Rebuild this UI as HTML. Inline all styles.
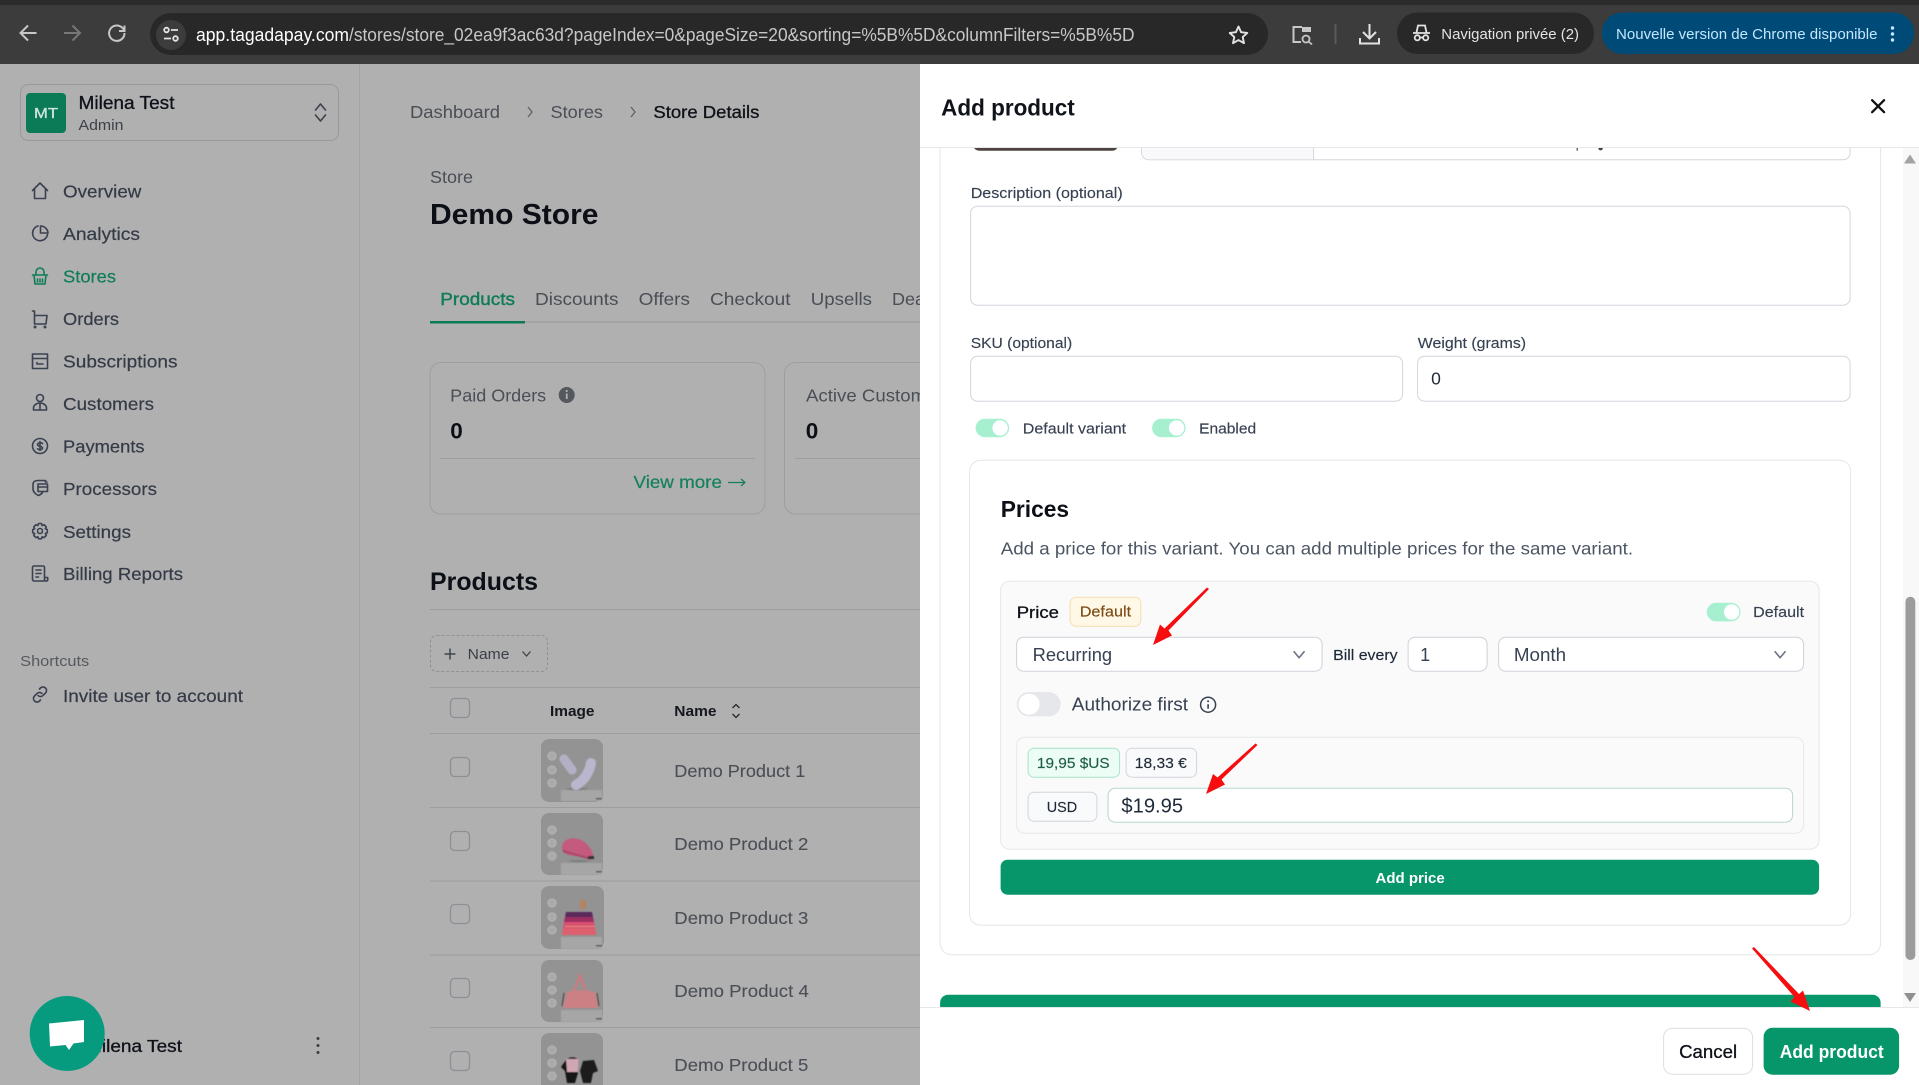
<!DOCTYPE html>
<html lang="fr"><head><meta charset="utf-8"><title>Add product</title>
<style>
html,body{margin:0;padding:0;background:#b0b0b0;overflow:hidden}
svg{display:block}
text{font-family:"Liberation Sans",sans-serif;white-space:pre}
.nav{font-size:17.5px;fill:#343a46;stroke:#343a46;stroke-width:.2}
.dk{fill:#0e1118;stroke:#0e1118;stroke-width:.3}
.g2{fill:#4a4e55}
.b{font-weight:700}
.lab{font-size:15px;fill:#374151;stroke:#374151;stroke-width:.15}
.ic{fill:none;stroke:#3a4150;stroke-width:2;stroke-linecap:round;stroke-linejoin:round}
.chev{fill:none;stroke:#6b7280;stroke-width:1.6;stroke-linecap:round;stroke-linejoin:round}
</style></head>
<body>
<svg xmlns="http://www.w3.org/2000/svg" width="1919" height="1085" viewBox="0 0 1919 1085">
<defs><filter id="soft" x="-5%" y="-5%" width="110%" height="110%"><feGaussianBlur stdDeviation="0.45"/></filter></defs>
<!-- page background -->
<rect x="0" y="64" width="1919" height="1021" fill="#b0b0b0"/>
<rect x="359" y="64" width="1" height="1021" fill="#a4a4a6"/>

<!-- sidebar account -->
<rect x="20.500" y="84.500" width="318" height="56" rx="8" fill="#b0b0b0" stroke="#98999e"/>
<rect x="26" y="93" width="40" height="40" rx="4" fill="#0b7a57"/>
<text x="34" y="118" font-size="15" fill="#cfe3dc" stroke="#cfe3dc" stroke-width=".35" textLength="24" lengthAdjust="spacingAndGlyphs">MT</text>
<text x="78.500" y="109" font-size="18" class="dk" textLength="96" lengthAdjust="spacingAndGlyphs">Milena Test</text>
<text x="78.500" y="130" font-size="15" fill="#3c4048" textLength="45" lengthAdjust="spacingAndGlyphs">Admin</text>
<path d="M315.500 110l5-6 5 6M315.500 115l5 6 5-6" fill="none" stroke="#3f444d" stroke-width="1.700" stroke-linecap="round" stroke-linejoin="round"/>

<!-- sidebar nav icons -->
<path class="ic" style="stroke-width:1.6" d="M32.500 190.500 40 183l7.500 7.500M34.500 188.500V198.500H45.500V188.500"/>
<g class="ic" style="stroke-width:1.6"><path d="M38 226a7.500 7.500 0 1 0 9.500 8.500"/><path d="M40.500 226a7.500 7.500 0 0 1 7.500 7H40.500z"/></g>
<g class="ic" style="stroke:#0e7c58;stroke-width:1.6"><path d="M32.500 275H47.500M34 275l1 9H45l1-9M36 275v-3a4 4 0 0 1 8 0v3"/><path d="M37.500 279v3M40 279v3M42.500 279v3"/></g>
<g class="ic" style="stroke-width:1.6"><path d="M32.500 311H34.500V324H46l1-8.500H35"/><circle cx="35" cy="327" r=".7"/><circle cx="45" cy="327" r=".7"/></g>
<g class="ic" style="stroke-width:1.6"><rect x="32.500" y="354" width="15" height="14.500"/><path d="M32.500 358.500H47.500M37 364h6M37 364v-1.500"/></g>
<g class="ic" style="stroke-width:1.6"><circle cx="40" cy="398" r="3.500"/><path d="M33.500 410v-2a6.500 5 0 0 1 13 0v2zM40 403v7"/></g>
<g class="ic" style="stroke-width:1.6"><circle cx="40" cy="446" r="7.500"/><path d="M42.500 443.500c-1-1-5-1-5 1 0 2.500 5 1 5 3.500 0 2-4 2-5 .8M40 441.500v9"/></g>
<g class="ic" style="stroke-width:1.600"><path d="M47 482h-1.500v-1.500H38c-3 0-5 1.500-5 4v4.500c0 3 3 5.500 5.500 6.500 1.500-.6 3-1.500 4-3"/><rect x="38" y="484" width="9.500" height="7.500"/><path d="M38 487h9.500"/></g>
<g class="ic" style="stroke-width:1.6"><circle cx="40" cy="531" r="2.500"/><path d="M38.500 523.500h3l.6 2 2-.8 2.200 2.200-1 1.900 2 .8v3.100l-2 .8 1 1.900-2.200 2.200-2-.8-.6 2h-3l-.6-2-2 .8-2.200-2.200 1-1.900-2-.8v-3.100l2-.8-1-1.900 2.200-2.200 2 .8z"/></g>
<g class="ic" style="stroke-width:1.600"><path d="M44.500 581H34a1.500 1.500 0 0 1-1.500-1.500V567.500A1.500 1.500 0 0 1 34 566H43a1.500 1.500 0 0 1 1.500 1.500V581h2a1.200 1.200 0 0 0 1.200-1.200v-2.300h-3.200"/><path d="M36 570h5M36 573.500h5M36 577h2.500"/></g>
<g class="ic" style="stroke-width:1.6"><path d="M38 695.500a3.500 3.500 0 0 0 5 0l2.500-2.500a3.500 3.500 0 0 0-5-5l-1 1"/><path d="M42 693.500a3.500 3.500 0 0 0-5 0l-2.500 2.500a3.500 3.500 0 0 0 5 5l1-1"/></g>

<text x="63" y="197.300" class="nav" textLength="78.400" lengthAdjust="spacingAndGlyphs">Overview</text>
<text x="63" y="239.800" class="nav" textLength="77" lengthAdjust="spacingAndGlyphs">Analytics</text>
<text x="63" y="282.500" font-size="17.500" style="fill:#0e7c58;stroke:#0e7c58;stroke-width:.2" textLength="53" lengthAdjust="spacingAndGlyphs">Stores</text>
<text x="63" y="324.800" class="nav" textLength="56" lengthAdjust="spacingAndGlyphs">Orders</text>
<text x="63" y="367.500" class="nav" textLength="114.500" lengthAdjust="spacingAndGlyphs">Subscriptions</text>
<text x="63" y="410" class="nav" textLength="91" lengthAdjust="spacingAndGlyphs">Customers</text>
<text x="63" y="452.500" class="nav" textLength="81.600" lengthAdjust="spacingAndGlyphs">Payments</text>
<text x="63" y="495" class="nav" textLength="94" lengthAdjust="spacingAndGlyphs">Processors</text>
<text x="63" y="538" class="nav" textLength="68" lengthAdjust="spacingAndGlyphs">Settings</text>
<text x="63" y="580" class="nav" textLength="120" lengthAdjust="spacingAndGlyphs">Billing Reports</text>
<text x="20.200" y="666" font-size="15" fill="#56595f" textLength="69" lengthAdjust="spacingAndGlyphs">Shortcuts</text>
<text x="63" y="702" class="nav" textLength="180" lengthAdjust="spacingAndGlyphs">Invite user to account</text>

<!-- sidebar footer -->
<circle cx="62" cy="1046" r="22" fill="#a6a6a6"/>
<text x="86" y="1052" font-size="17.500" class="dk" textLength="96" lengthAdjust="spacingAndGlyphs">Milena Test</text>
<g fill="#3a3f47"><circle cx="318" cy="1038.500" r="1.500"/><circle cx="318" cy="1045.500" r="1.500"/><circle cx="318" cy="1052.500" r="1.500"/></g>

<!-- breadcrumb -->
<text x="410" y="118" font-size="17.500" class="g2" textLength="90" lengthAdjust="spacingAndGlyphs">Dashboard</text>
<path d="M528 107l4 5-4 5M631 107l4 5-4 5" fill="none" stroke="#5f6268" stroke-width="1.300"/>
<text x="550.500" y="118" font-size="17.500" class="g2" textLength="52.500" lengthAdjust="spacingAndGlyphs">Stores</text>
<text x="653.400" y="118" font-size="17.500" class="dk" textLength="106" lengthAdjust="spacingAndGlyphs">Store Details</text>

<!-- heading -->
<text x="430" y="183" font-size="17.500" class="g2" textLength="43" lengthAdjust="spacingAndGlyphs">Store</text>
<text x="430" y="224" font-size="29" font-weight="700" fill="#0c0f16" textLength="168.500" lengthAdjust="spacingAndGlyphs">Demo Store</text>

<!-- tabs -->
<rect x="430" y="321.500" width="490" height="1.200" fill="#9d9d9f"/>
<rect x="430" y="321" width="95" height="2.500" fill="#0b7a57"/>
<text x="440.300" y="305" font-size="17.500" fill="#0e7c58" stroke="#0e7c58" stroke-width=".4" textLength="74.700" lengthAdjust="spacingAndGlyphs">Products</text>
<text x="535" y="305" font-size="17.500" class="g2" textLength="83.500" lengthAdjust="spacingAndGlyphs">Discounts</text>
<text x="638.700" y="305" font-size="17.500" class="g2" textLength="51.300" lengthAdjust="spacingAndGlyphs">Offers</text>
<text x="710" y="305" font-size="17.500" class="g2" textLength="80.500" lengthAdjust="spacingAndGlyphs">Checkout</text>
<text x="810.800" y="305" font-size="17.500" class="g2" textLength="61.200" lengthAdjust="spacingAndGlyphs">Upsells</text>
<text x="892" y="305" font-size="17.500" class="g2" textLength="46" lengthAdjust="spacingAndGlyphs">Deals</text>

<!-- stat cards -->
<rect x="430" y="362.500" width="335" height="151.500" rx="11" fill="#b0b0b0" stroke="#9e9ea1"/>
<rect x="784.500" y="362.500" width="300" height="151.500" rx="11" fill="#b0b0b0" stroke="#9e9ea1"/>
<text x="450.200" y="401.500" font-size="17.500" class="g2" textLength="96" lengthAdjust="spacingAndGlyphs">Paid Orders</text>
<circle cx="566.700" cy="395" r="8" fill="#55585e"/>
<rect x="565.800" y="393.500" width="1.900" height="5.500" fill="#b0b0b0"/><circle cx="566.700" cy="391" r="1.100" fill="#b0b0b0"/>
<text x="806" y="401.500" font-size="17.500" class="g2" textLength="146" lengthAdjust="spacingAndGlyphs">Active Customers</text>
<text x="450.200" y="438.500" font-size="22.500" font-weight="700" fill="#0c0f16">0</text>
<text x="805.800" y="438.500" font-size="22.500" font-weight="700" fill="#0c0f16">0</text>
<rect x="440" y="458" width="315" height="1" fill="#9d9d9f"/>
<rect x="795" y="458" width="125" height="1" fill="#9d9d9f"/>
<text x="633.500" y="488" font-size="17.500" fill="#14805c" stroke="#14805c" stroke-width=".2" textLength="88.400" lengthAdjust="spacingAndGlyphs">View more</text>
<path d="M728 482.500H745M741 479l4 3.500-4 3.500" fill="none" stroke="#14805c" stroke-width="1.200"/>

<!-- products -->
<text x="430" y="590" font-size="25" font-weight="700" fill="#0c0f16" textLength="108" lengthAdjust="spacingAndGlyphs">Products</text>
<rect x="430" y="609" width="490" height="1" fill="#9d9d9f"/>
<rect x="430.500" y="635.500" width="117" height="36" rx="6" fill="none" stroke="#8f9096" stroke-dasharray="3 2"/>
<path d="M444.500 654h11M450 648.500v11" stroke="#3f444d" stroke-width="1.500" fill="none"/>
<text x="467.700" y="659" font-size="15" fill="#3c4048" textLength="41.700" lengthAdjust="spacingAndGlyphs">Name</text>
<path d="M522.500 651.500l4 4.500 4-4.500" fill="none" stroke="#3f444d" stroke-width="1.300"/>
<rect x="430" y="687" width="490" height="1" fill="#9d9d9f"/>

<!-- table -->
<rect x="450.500" y="698.500" width="19" height="19" rx="4" fill="none" stroke="#8e8f96" stroke-width="1.300"/>
<text x="550" y="716" font-size="15" font-weight="700" fill="#14171d" textLength="44.500" lengthAdjust="spacingAndGlyphs">Image</text>
<text x="674.300" y="716" font-size="15" font-weight="700" fill="#14171d" textLength="42.200" lengthAdjust="spacingAndGlyphs">Name</text>
<path d="M732.500 708l3.500-3.500 3.500 3.500M732.500 714l3.500 3.500 3.500-3.500" fill="none" stroke="#23262d" stroke-width="1.300"/>
<g fill="#9d9d9f">
<rect x="430" y="733" width="490" height="1"/><rect x="430" y="807" width="490" height="1"/><rect x="430" y="880.500" width="490" height="1"/><rect x="430" y="954.500" width="490" height="1"/><rect x="430" y="1027" width="490" height="1"/>
</g>
<g fill="none" stroke="#8e8f96" stroke-width="1.300">
<rect x="450.500" y="757.500" width="19" height="19" rx="4"/><rect x="450.500" y="831.500" width="19" height="19" rx="4"/><rect x="450.500" y="904.500" width="19" height="19" rx="4"/><rect x="450.500" y="978.500" width="19" height="19" rx="4"/><rect x="450.500" y="1051.500" width="19" height="19" rx="4"/>
</g>
<g font-size="17.500" class="g2" style="stroke:#4a4e55;stroke-width:.1">
<text x="674.300" y="777" textLength="131" lengthAdjust="spacingAndGlyphs">Demo Product 1</text>
<text x="674.300" y="850" textLength="134" lengthAdjust="spacingAndGlyphs">Demo Product 2</text>
<text x="674.300" y="924" textLength="134" lengthAdjust="spacingAndGlyphs">Demo Product 3</text>
<text x="674.300" y="997" textLength="134.500" lengthAdjust="spacingAndGlyphs">Demo Product 4</text>
<text x="674.300" y="1071" textLength="134" lengthAdjust="spacingAndGlyphs">Demo Product 5</text>
</g>

<!-- thumbs -->
<g transform="translate(541,739)">
<rect width="62" height="63" rx="8" fill="#939393"/>
<g filter="url(#soft)">
<rect x="20" y="51" width="41" height="11" fill="#a6a6a6"/><rect x="55" y="59" width="6" height="1.500" fill="#555"/>
<ellipse cx="36" cy="50" rx="11" ry="1.300" fill="#808080"/>
<g fill="#a9a9a9" stroke="#bcbcbc"><circle cx="11" cy="17" r="4"/><circle cx="11" cy="31" r="4"/><circle cx="11" cy="44" r="4"/></g>
<path d="M23 20L31 31" stroke="#b3b0c6" stroke-width="9" stroke-linecap="round"/>
<path d="M50 24C48 35 42 42 35 46" stroke="#b9b6cd" stroke-width="10" stroke-linecap="round" fill="none"/>
</g></g>
<g transform="translate(541,813)">
<rect width="62" height="62" rx="8" fill="#939393"/>
<g filter="url(#soft)">
<rect x="20" y="50" width="41" height="12" fill="#a6a6a6"/><rect x="55" y="58" width="6" height="1.500" fill="#555"/>
<ellipse cx="38" cy="48" rx="10" ry="1.300" fill="#808080"/>
<g fill="#a9a9a9" stroke="#bcbcbc"><circle cx="11" cy="17" r="4"/><circle cx="11" cy="30" r="4"/><circle cx="11" cy="43" r="4"/></g>
<path d="M21 35C21 25 33 23 42 28C49 33 53 40 52 45L33 43C27 42 21 41 21 35z" fill="#c45a7e"/>
<path d="M22 38L50 46" stroke="#a94866" stroke-width="2" fill="none"/><rect x="47" y="43" width="6" height="3" fill="#333"/>
</g></g>
<g transform="translate(541,886)">
<rect width="63" height="63" rx="8" fill="#939393"/>
<g filter="url(#soft)">
<rect x="20" y="51" width="41" height="12" fill="#a6a6a6"/><rect x="55" y="59" width="6" height="1.500" fill="#555"/>
<g fill="#a9a9a9" stroke="#bcbcbc"><circle cx="11" cy="17" r="4"/><circle cx="11" cy="31" r="4"/><circle cx="11" cy="44" r="4"/></g>
<rect x="39" y="14" width="6" height="9" fill="#b58262"/>
<path d="M25 26H51L52 31H24z" fill="#5a2a5c"/><path d="M24 31H52L53 36H23z" fill="#9c2f62"/>
<path d="M23 36H53L54 42H22z" fill="#d84f72"/><path d="M22 42H54L55 49H21z" fill="#de5f6e"/>
<rect x="24" y="40" width="30" height="1" fill="#e78a78"/>
</g></g>
<g transform="translate(541,960)">
<rect width="62" height="62" rx="8" fill="#939393"/>
<g filter="url(#soft)">
<rect x="20" y="50" width="41" height="12" fill="#a6a6a6"/><rect x="55" y="58" width="6" height="1.500" fill="#555"/>
<g fill="#a9a9a9" stroke="#bcbcbc"><circle cx="11" cy="17" r="4"/><circle cx="11" cy="30" r="4"/><circle cx="11" cy="43" r="4"/></g>
<path d="M31 36L39 16L47 36" fill="none" stroke="#c47f82" stroke-width="3"/>
<path d="M26 32C32 30 46 30 54 32L57 48H22z" fill="#cc8084"/>
<path d="M23 33L21 46M56 33L58 46" stroke="#4a3a3a" stroke-width="1"/>
</g></g>
<g transform="translate(541,1033)">
<rect width="62" height="62" rx="8" fill="#939393"/>
<g filter="url(#soft)">
<g fill="#a9a9a9" stroke="#bcbcbc"><circle cx="11" cy="17" r="4"/><circle cx="11" cy="30" r="4"/><circle cx="11" cy="43" r="4"/></g>
<path d="M25 27C29 23 35 24 38 27L37 40L34 50H26L24 38L20 34z" fill="#151515"/>
<path d="M25 26H38L37 39H26z" fill="#cfa6b2"/>
<path d="M42 28L53 27L57 38L52 40L50 50H42L39 38z" fill="#1a1a1a"/>
</g></g>

<!-- chat bubble -->
<ellipse cx="67.200" cy="1033.500" rx="37.500" ry="37.500" fill="#069b7e"/>
<path d="M49 1023.500L84 1020L84 1042L73.500 1043.500L69 1050L65.500 1045L50 1046.500z" fill="#fff"/>

<!-- ===== Browser chrome ===== -->
<rect x="0" y="0" width="1919" height="64" fill="#3c3c3c"/>
<rect x="0" y="0" width="1919" height="5" fill="#2b2b2b"/>
<rect x="150" y="13" width="1118" height="42" rx="21" fill="#282828"/>
<path d="M36.500 33H21M28 25.500L20.500 33l7.500 7.500" fill="none" stroke="#c7c7c7" stroke-width="2"/>
<path d="M64 33H79.500M72.500 25.500L80 33 72.500 40.500" fill="none" stroke="#777" stroke-width="2"/>
<path d="M124.500 33A7.700 7.700 0 1 1 122 27.500l2.500 2.500M124.500 25.500V31H119" fill="none" stroke="#c7c7c7" stroke-width="2"/>
<circle cx="171" cy="35" r="15" fill="#3c3c3c"/>
<g fill="none" stroke="#e3e3e3" stroke-width="1.800"><circle cx="166.500" cy="30" r="2.300"/><path d="M171 30H178M164 38.500H171"/><circle cx="175.500" cy="38.500" r="2.300"/></g>
<text x="196" y="41" font-size="18" fill="#ffffff" textLength="153" lengthAdjust="spacingAndGlyphs">app.tagadapay.com</text>
<text x="349" y="41" font-size="18" fill="#c7c7c7" textLength="785.500" lengthAdjust="spacingAndGlyphs">/stores/store_02ea9f3ac63d?pageIndex=0&amp;pageSize=20&amp;sorting=%5B%5D&amp;columnFilters=%5B%5D</text>
<path d="M1238.500 26.500l2.600 5.700 6.200.7-4.600 4.200 1.300 6.100-5.500-3.100-5.500 3.100 1.300-6.100-4.600-4.200 6.200-.7z" fill="none" stroke="#e3e3e3" stroke-width="1.900" stroke-linejoin="round"/>
<path d="M1302 27H1293.500V42H1301" fill="none" stroke="#c7c7c7" stroke-width="2"/>
<rect x="1302" y="27" width="9" height="5" fill="#c7c7c7"/>
<circle cx="1306" cy="39" r="3.500" fill="none" stroke="#c7c7c7" stroke-width="1.800"/><path d="M1308.500 41.500L1312 44.500" stroke="#c7c7c7" stroke-width="1.800"/>
<rect x="1334.500" y="24" width="2" height="20" fill="#5a5a5a"/>
<path d="M1369.500 24V38M1363 32l6.500 6.500 6.500-6.500" fill="none" stroke="#e3e3e3" stroke-width="2"/>
<path d="M1360 38V43.500H1379V38" fill="none" stroke="#e3e3e3" stroke-width="2"/>
<rect x="1397" y="12.500" width="197" height="41.500" rx="20.500" fill="#282828"/>
<g fill="none" stroke="#e3e3e3" stroke-width="1.800"><path d="M1416.500 32.500l1.500-7h7l1.500 7M1413 33H1430"/><circle cx="1417.300" cy="37.800" r="2.600"/><circle cx="1425.700" cy="37.800" r="2.600"/><path d="M1420 37.500h3"/></g>
<text x="1441.300" y="39" font-size="15" fill="#e3e3e3" textLength="137.700" lengthAdjust="spacingAndGlyphs">Navigation privée (2)</text>
<rect x="1601.800" y="12.500" width="312.200" height="41.500" rx="20.500" fill="#004a77"/>
<text x="1616" y="39" font-size="15" fill="#c2e7ff" textLength="261.500" lengthAdjust="spacingAndGlyphs">Nouvelle version de Chrome disponible</text>
<g fill="#c2e7ff"><circle cx="1892.500" cy="28" r="1.700"/><circle cx="1892.500" cy="34" r="1.700"/><circle cx="1892.500" cy="40" r="1.700"/></g>

<!-- ===== Modal ===== -->
<rect x="920" y="64" width="999" height="1021" fill="#fff"/>
<rect x="1903" y="148" width="16" height="859" fill="#f8f8f8"/>
<g transform="translate(-0.9,-0.3)">
<path d="M941 148V943.500a11.500 11.500 0 0 0 11.500 11.500H1870a11.500 11.500 0 0 0 11.500-11.500V148" fill="#fff" stroke="#e4e5e9"/>

<!-- remnants under header -->
<path d="M975 148H1118C1117 151 1114 151 1111 151H982C978 151 976 150 975 148z" fill="#4e4340"/>
<path d="M1142.500 148V153a7 7 0 0 0 7 7H1844a7 7 0 0 0 7-7V148" fill="#fff" stroke="#d4d6de"/>
<path d="M1143 148H1314V159.500H1150C1145 159.500 1143 156 1143 153z" fill="#f9f9fb"/>
<rect x="1314" y="148" width="1" height="12" fill="#d4d6de"/>
<rect x="1577.500" y="148" width="1.300" height="3" fill="#555"/>
<circle cx="1601.500" cy="148.500" r="2.200" fill="#444"/>
</g>

<!-- header -->
<rect x="920" y="64" width="999" height="83" fill="#fff"/>
<rect x="920" y="147" width="999" height="1" fill="#e5e7eb"/>

<g transform="translate(-0.9,-0.3)">
<text x="942" y="116" font-size="23" font-weight="700" fill="#10131a" textLength="133.700" lengthAdjust="spacingAndGlyphs">Add product</text>
<path d="M1873 100.500L1885 112.500M1885 100.500L1873 112.500" stroke="#111" stroke-width="2.300" stroke-linecap="round"/>

<!-- description -->
<text x="971.600" y="198.500" class="lab" textLength="152" lengthAdjust="spacingAndGlyphs">Description (optional)</text>
<rect x="971.500" y="206.500" width="879.500" height="99" rx="7" fill="#fff" stroke="#d4d6de"/>
<text x="971.600" y="348.500" class="lab" textLength="101.500" lengthAdjust="spacingAndGlyphs">SKU (optional)</text>
<text x="1418.700" y="348.500" class="lab" textLength="108.300" lengthAdjust="spacingAndGlyphs">Weight (grams)</text>
<rect x="971.500" y="356.500" width="432" height="45" rx="7" fill="#fff" stroke="#d4d6de"/>
<rect x="1418.500" y="356.500" width="432.500" height="45" rx="7" fill="#fff" stroke="#d4d6de"/>
<text x="1432" y="385" font-size="17.500" fill="#1f2937">0</text>

<!-- toggles -->
<rect x="976.500" y="419" width="33.500" height="18.500" rx="9.250" fill="#a7f0cf"/><circle cx="1001" cy="428.200" r="7.700" fill="#fff"/>
<text x="1023.700" y="434" class="lab" textLength="103.300" lengthAdjust="spacingAndGlyphs">Default variant</text>
<rect x="1153" y="419" width="33.500" height="18.500" rx="9.250" fill="#a7f0cf"/><circle cx="1177.500" cy="428.200" r="7.700" fill="#fff"/>
<text x="1200" y="434" class="lab" textLength="57" lengthAdjust="spacingAndGlyphs">Enabled</text>

<!-- prices card -->
<rect x="970.500" y="460.500" width="881" height="465" rx="11" fill="#fff" stroke="#e4e5e9"/>
<text x="1001.600" y="517.500" font-size="23" font-weight="700" fill="#0c0f16" textLength="68.400" lengthAdjust="spacingAndGlyphs">Prices</text>
<text x="1001.600" y="555" font-size="17.500" fill="#4b5563" textLength="632.400" lengthAdjust="spacingAndGlyphs">Add a price for this variant. You can add multiple prices for the same variant.</text>

<!-- price panel -->
<rect x="1001.500" y="581.500" width="818.500" height="268" rx="9" fill="#fafafa" stroke="#e6e7ea"/>
<text x="1017.600" y="618.500" font-size="17" class="dk" textLength="42.200" lengthAdjust="spacingAndGlyphs">Price</text>
<rect x="1071" y="597.500" width="70.700" height="29" rx="6" fill="#fff8e6" stroke="#f3dfae"/>
<text x="1080.600" y="617" font-size="15" fill="#7b4a14" stroke="#7b4a14" stroke-width=".15" textLength="51.400" lengthAdjust="spacingAndGlyphs">Default</text>
<rect x="1707.700" y="603" width="33.700" height="18.700" rx="9.350" fill="#a7f0cf"/><circle cx="1732.500" cy="612.300" r="7.700" fill="#fff"/>
<text x="1754" y="617.500" class="lab" textLength="51" lengthAdjust="spacingAndGlyphs">Default</text>

<rect x="1017.500" y="637.500" width="305.500" height="34" rx="7" fill="#fff" stroke="#cfd2da"/>
<text x="1033.500" y="661.500" font-size="18" fill="#374151" textLength="79.500" lengthAdjust="spacingAndGlyphs">Recurring</text>
<path d="M1295 652l5 6 5-6" class="chev"/>
<text x="1334" y="660.500" font-size="15" fill="#1f2937" stroke="#1f2937" stroke-width=".15" textLength="64.500" lengthAdjust="spacingAndGlyphs">Bill every</text>
<rect x="1409" y="637.500" width="79" height="34" rx="7" fill="#fff" stroke="#cfd2da"/>
<text x="1421" y="661.500" font-size="18" fill="#374151">1</text>
<rect x="1499.500" y="637.500" width="305" height="34" rx="7" fill="#fff" stroke="#cfd2da"/>
<text x="1514.800" y="661.500" font-size="18" fill="#374151" textLength="52.200" lengthAdjust="spacingAndGlyphs">Month</text>
<path d="M1776 652l5 6 5-6" class="chev"/>

<rect x="1017.600" y="692.300" width="44" height="24.400" rx="12.200" fill="#e5e7eb"/><circle cx="1030" cy="704.500" r="10.500" fill="#fff"/>
<text x="1072.700" y="711" font-size="18" fill="#374151" textLength="116.300" lengthAdjust="spacingAndGlyphs">Authorize first</text>
<circle cx="1209" cy="705" r="7.500" fill="none" stroke="#374151" stroke-width="1.500"/>
<path d="M1209 704.500v4.500" stroke="#374151" stroke-width="1.600"/><circle cx="1209" cy="701.500" r="1" fill="#374151"/>

<!-- inner price -->
<rect x="1017.500" y="737.500" width="787" height="96" rx="8" fill="#fafafa" stroke="#e6e8eb"/>
<rect x="1029" y="748.500" width="91.500" height="29" rx="6" fill="#ecfdf5" stroke="#a7e3c8"/>
<text x="1037.800" y="768.500" font-size="15" fill="#1f5e46" stroke="#1f5e46" stroke-width=".15" textLength="72.800" lengthAdjust="spacingAndGlyphs">19,95 $US</text>
<rect x="1127" y="748.500" width="70.500" height="29" rx="6" fill="#f9fafb" stroke="#d1d5db"/>
<text x="1135.700" y="768.500" font-size="15" fill="#1f2937" stroke="#1f2937" stroke-width=".15" textLength="52" lengthAdjust="spacingAndGlyphs">18,33 €</text>
<rect x="1029" y="792.500" width="68.800" height="29" rx="6" fill="#f9fafb" stroke="#d1d5db"/>
<text x="1047.600" y="812.500" font-size="15" fill="#1f2937" stroke="#1f2937" stroke-width=".15" textLength="30.400" lengthAdjust="spacingAndGlyphs">USD</text>
<rect x="1109" y="788.500" width="684.500" height="34" rx="7" fill="#fff" stroke="#b9d5d0"/>
<text x="1122.300" y="813" font-size="20" fill="#1f2937" textLength="61.700" lengthAdjust="spacingAndGlyphs">$19.95</text>

<rect x="1001.500" y="860" width="818.500" height="35" rx="7" fill="#069669"/>
<text x="1376.400" y="883.500" font-size="15" font-weight="700" fill="#fff" textLength="69.200" lengthAdjust="spacingAndGlyphs">Add price</text>

<!-- cut-off green button -->
<path d="M941 1007.500V1003a8 8 0 0 1 8-8H1873.500a8 8 0 0 1 8 8v4.500z" fill="#069669"/>
</g>

<!-- scrollbar -->
<rect x="1905.500" y="596.700" width="9.800" height="363.300" rx="4.900" fill="#9c9c9c"/>
<path d="M1910 154.500L1916 163.500H1904z" fill="#a3a3a3"/>
<path d="M1904 993H1916L1910 1002z" fill="#909090"/>

<!-- footer -->
<rect x="920" y="1007.500" width="999" height="77.500" fill="#fff"/>
<rect x="920" y="1007" width="999" height="1" fill="#e5e7eb"/>
<g transform="translate(-0.9,-0.3)">
<rect x="1664.500" y="1028.500" width="89" height="46" rx="9" fill="#fff" stroke="#dcdee3"/>
<text x="1680" y="1058.500" font-size="18" class="dk" textLength="58" lengthAdjust="spacingAndGlyphs">Cancel</text>
<rect x="1764.500" y="1028" width="135.500" height="47" rx="9" fill="#069669"/>
<text x="1780.600" y="1058.500" font-size="18" font-weight="700" fill="#fff" textLength="104" lengthAdjust="spacingAndGlyphs">Add product</text>
</g>

<!-- red arrows -->
<g fill="#f60d10">
<path d="M1207 587.500L1209 589L1168.500 630.500L1172 635.500L1153 645L1160 624.500L1164.500 628.500z"/>
<path d="M1255.500 743.500L1257.500 745L1221.500 779.500L1225 784.500L1206 794L1213 774L1217.500 777.500z"/>
<path transform="translate(-2,0)" d="M1754 948.500L1756 947L1801 994L1805 990.500L1812 1011L1792.500 1001.500L1796.500 997z"/>
</g>
</svg>
</body></html>
